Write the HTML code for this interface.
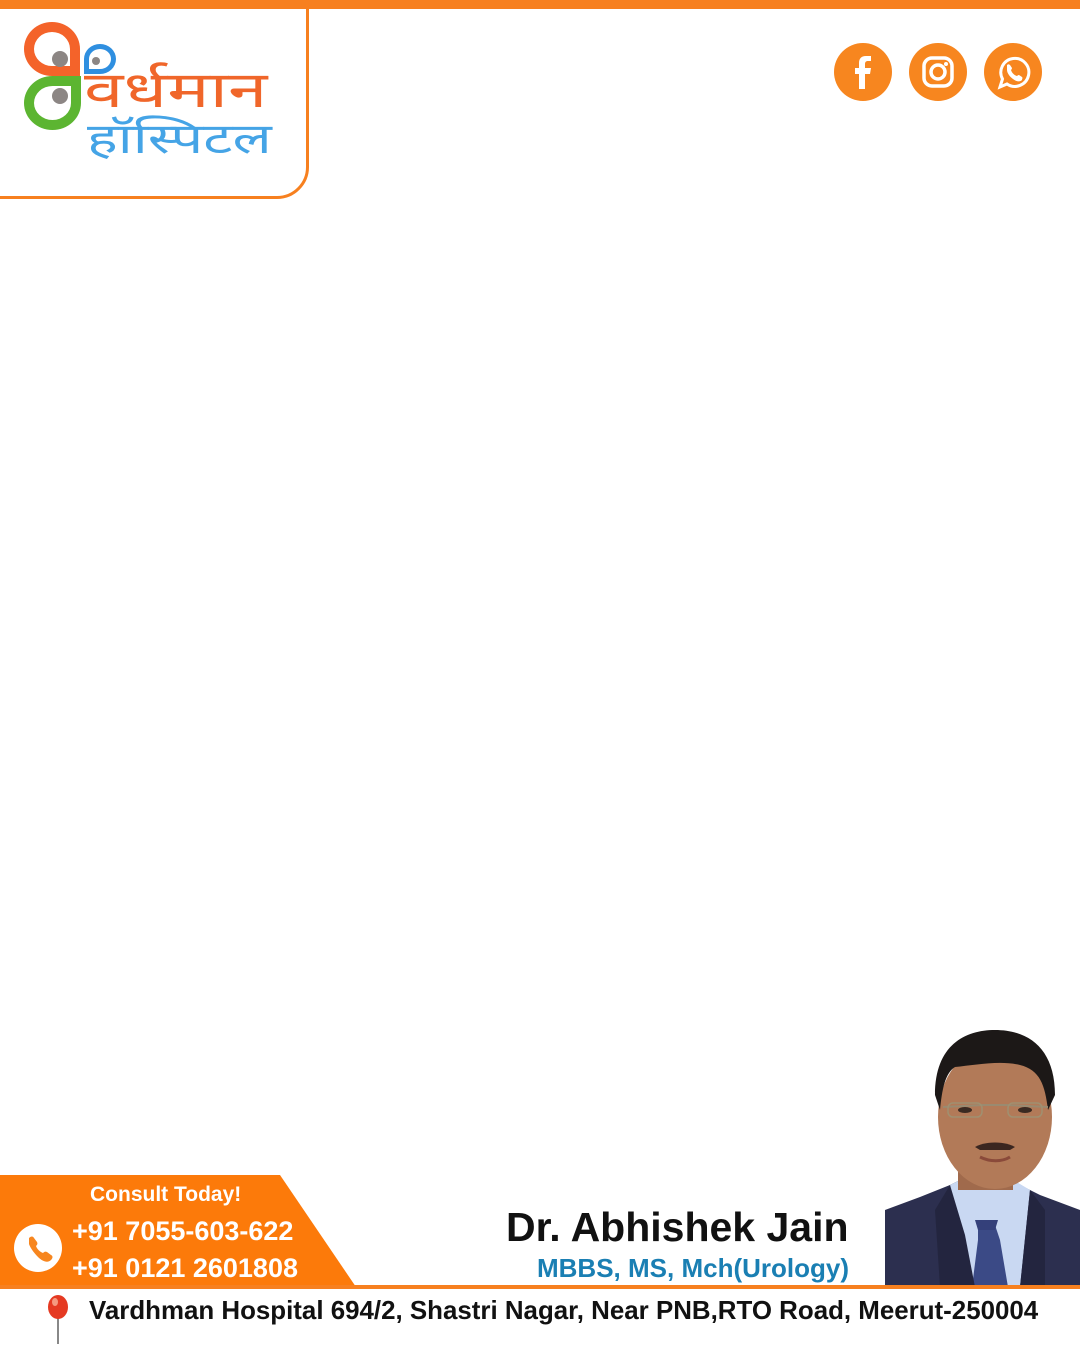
<!DOCTYPE html>
<html><head><meta charset="utf-8"><style>
*{margin:0;padding:0;box-sizing:border-box}
body{width:1080px;height:1350px;background:#fff;position:relative;overflow:hidden;font-family:"Liberation Sans",sans-serif}
.abs{position:absolute}
.topbar{left:0;top:0;width:1080px;height:9px;background:#f7801f}
.logobox{left:-10px;top:-10px;width:319px;height:209px;border:3px solid #f7801f;border-bottom-right-radius:32px}
.petal{position:absolute;border-radius:50%}
.soc{position:absolute;top:43px;width:58px;height:58px;border-radius:50%;background:#f7861f}
.panel{left:0;top:1175px;width:360px;height:112px;background:#fc7a0a;clip-path:polygon(0 0,280px 0,356px 112px,0 112px)}
.line{left:0;top:1285px;width:1080px;height:4px;background:#f7801f}
.w{color:#fff;font-weight:bold}
</style></head><body>
<div class="abs topbar"></div>
<div class="abs logobox"></div>
<div class="petal" style="left:24px;top:22px;width:56px;height:54px;border:10px solid #f4632a;border-bottom-right-radius:0"></div>
<div class="petal" style="left:24px;top:76px;width:57px;height:54px;border:10px solid #5cb531;border-top-right-radius:0"></div>
<div class="petal" style="left:84px;top:44px;width:32px;height:30px;border:5px solid #2f8fe0;border-bottom-left-radius:0"></div>
<div class="petal" style="left:52px;top:51px;width:16px;height:16px;background:#8c8684"></div>
<div class="petal" style="left:52px;top:88px;width:16px;height:16px;background:#8c8684"></div>
<div class="petal" style="left:92px;top:57px;width:8px;height:8px;background:#8c8684"></div>
<div class="abs" style="left:84px;top:60px;font-family:'DejaVu Serif',serif;font-size:50px;color:#f0662a;line-height:60px;transform:scaleX(1.42);transform-origin:0 0;white-space:nowrap">वर्धमान</div>
<div class="abs" style="left:87px;top:114px;font-family:'DejaVu Serif',serif;font-size:42px;color:#45a4e6;line-height:50px;transform:scaleX(1.38);transform-origin:0 0;white-space:nowrap">हॉस्पिटल</div>

<div class="soc" style="left:834px"><svg width="58" height="58" viewBox="0 0 58 58"><path d="M31 46V31h5l1-6h-6v-4c0-2 1-3 3-3h3v-5h-5c-5 0-7 3-7 7v5h-4v6h4v15z" fill="#fff"/></svg></div>
<div class="soc" style="left:909px"><svg width="58" height="58" viewBox="0 0 58 58"><rect x="15" y="15" width="28" height="28" rx="8" fill="none" stroke="#fff" stroke-width="3.5"/><circle cx="29" cy="29" r="7" fill="none" stroke="#fff" stroke-width="3.5"/><circle cx="37" cy="21" r="2" fill="#fff"/></svg></div>
<div class="soc" style="left:984px"><svg width="58" height="58" viewBox="0 0 58 58"><path d="M16 44l2.5-8A14 14 0 1 1 23 41z" fill="none" stroke="#fff" stroke-width="3"/><path d="M23 22c1-1 2-1 3 0l2 3c0 1-1 2-1 2 1 3 3 5 6 6 0 0 1-1 2-1l3 2c1 1 0 2 0 3-2 2-5 2-9-1-3-2-6-6-6-9 0-2 0-4 0-5z" fill="#fff"/></svg></div>

<svg class="abs" style="left:880px;top:1025px" width="200" height="262" viewBox="0 0 200 262">
<path d="M5 185 L40 172 L70 160 L80 155 L130 155 L160 170 L200 185 L200 262 L5 262 Z" fill="#2c2f4f"/>
<path d="M70 160 L90 150 L125 150 L150 165 L140 262 L85 262 Z" fill="#c9d8f2"/>
<path d="M98 200 L115 200 L120 215 L128 262 L92 262 L98 215 Z" fill="#3b4a86"/>
<path d="M95 195 L118 195 L115 205 L98 205 Z" fill="#34407a"/>
<path d="M70 160 L85 210 L95 262 L60 262 L55 185 Z" fill="#23253f"/>
<path d="M150 165 L140 262 L165 262 L165 185 Z" fill="#23253f"/>
<rect x="78" y="120" width="55" height="45" fill="#a06a4c"/>
<ellipse cx="115" cy="92" rx="57" ry="72" fill="#b27a58"/>
<path d="M55 70 C55 20 85 5 115 5 C150 5 175 25 175 70 L168 85 C165 60 160 45 140 40 C120 35 95 40 75 42 C65 48 62 65 60 85 Z" fill="#1c1817"/>
<path d="M63 82 L104 80 L126 80 L168 82" stroke="#9a8a70" stroke-width="2" fill="none"/>
<rect x="68" y="78" width="34" height="14" rx="5" fill="none" stroke="#a09070" stroke-width="1.5"/>
<rect x="128" y="78" width="34" height="14" rx="5" fill="none" stroke="#a09070" stroke-width="1.5"/>
<ellipse cx="85" cy="85" rx="7" ry="3" fill="#3a2a22"/>
<ellipse cx="145" cy="85" rx="7" ry="3" fill="#3a2a22"/>
<path d="M95 122 C105 116 125 116 135 122 L130 125 L100 125 Z" fill="#3a2620"/>
<path d="M100 132 C110 137 122 137 130 132" stroke="#8a4a3a" stroke-width="3" fill="none"/>
</svg>

<div class="abs panel"></div>
<div class="abs w" style="left:90px;top:1183px;font-size:21px">Consult Today!</div>
<div class="abs w" style="left:72px;top:1216px;font-size:27px">+91 7055-603-622</div>
<div class="abs w" style="left:72px;top:1253px;font-size:27px">+91 0121 2601808</div>
<div class="abs" style="left:14px;top:1224px;width:48px;height:48px;border-radius:50%;background:#fff"><svg width="48" height="48" viewBox="0 0 48 48"><path d="M15 14c2-2 4-2 5 0l3 4c1 2 0 3-1 4 1 3 4 6 7 7 1-1 2-2 4-1l4 3c2 1 2 3 0 5-3 3-8 2-13-3-5-5-8-10-9-13 0-3 0-5 0-6z" fill="#f7861f"/></svg></div>
<div class="line abs"></div>
<div class="abs" style="left:506px;top:1204px;font-size:41px;color:#111;font-weight:bold;white-space:nowrap">Dr. Abhishek Jain</div>
<div class="abs" style="left:537px;top:1253px;font-size:26px;color:#1a7fb3;font-weight:bold;white-space:nowrap">MBBS, MS, Mch(Urology)</div>
<svg class="abs" style="left:42px;top:1294px" width="32" height="52" viewBox="0 0 32 52"><line x1="16" y1="20" x2="16" y2="50" stroke="#888" stroke-width="2"/><ellipse cx="16" cy="13" rx="10" ry="12" fill="#e53a22"/><ellipse cx="13" cy="8" rx="3" ry="4" fill="#f59a80"/></svg>
<div class="abs" style="left:89px;top:1297px;font-size:25.9px;color:#111;font-weight:bold;white-space:nowrap">Vardhman Hospital 694/2, Shastri Nagar, Near PNB,RTO Road, Meerut-250004</div>
</body></html>
